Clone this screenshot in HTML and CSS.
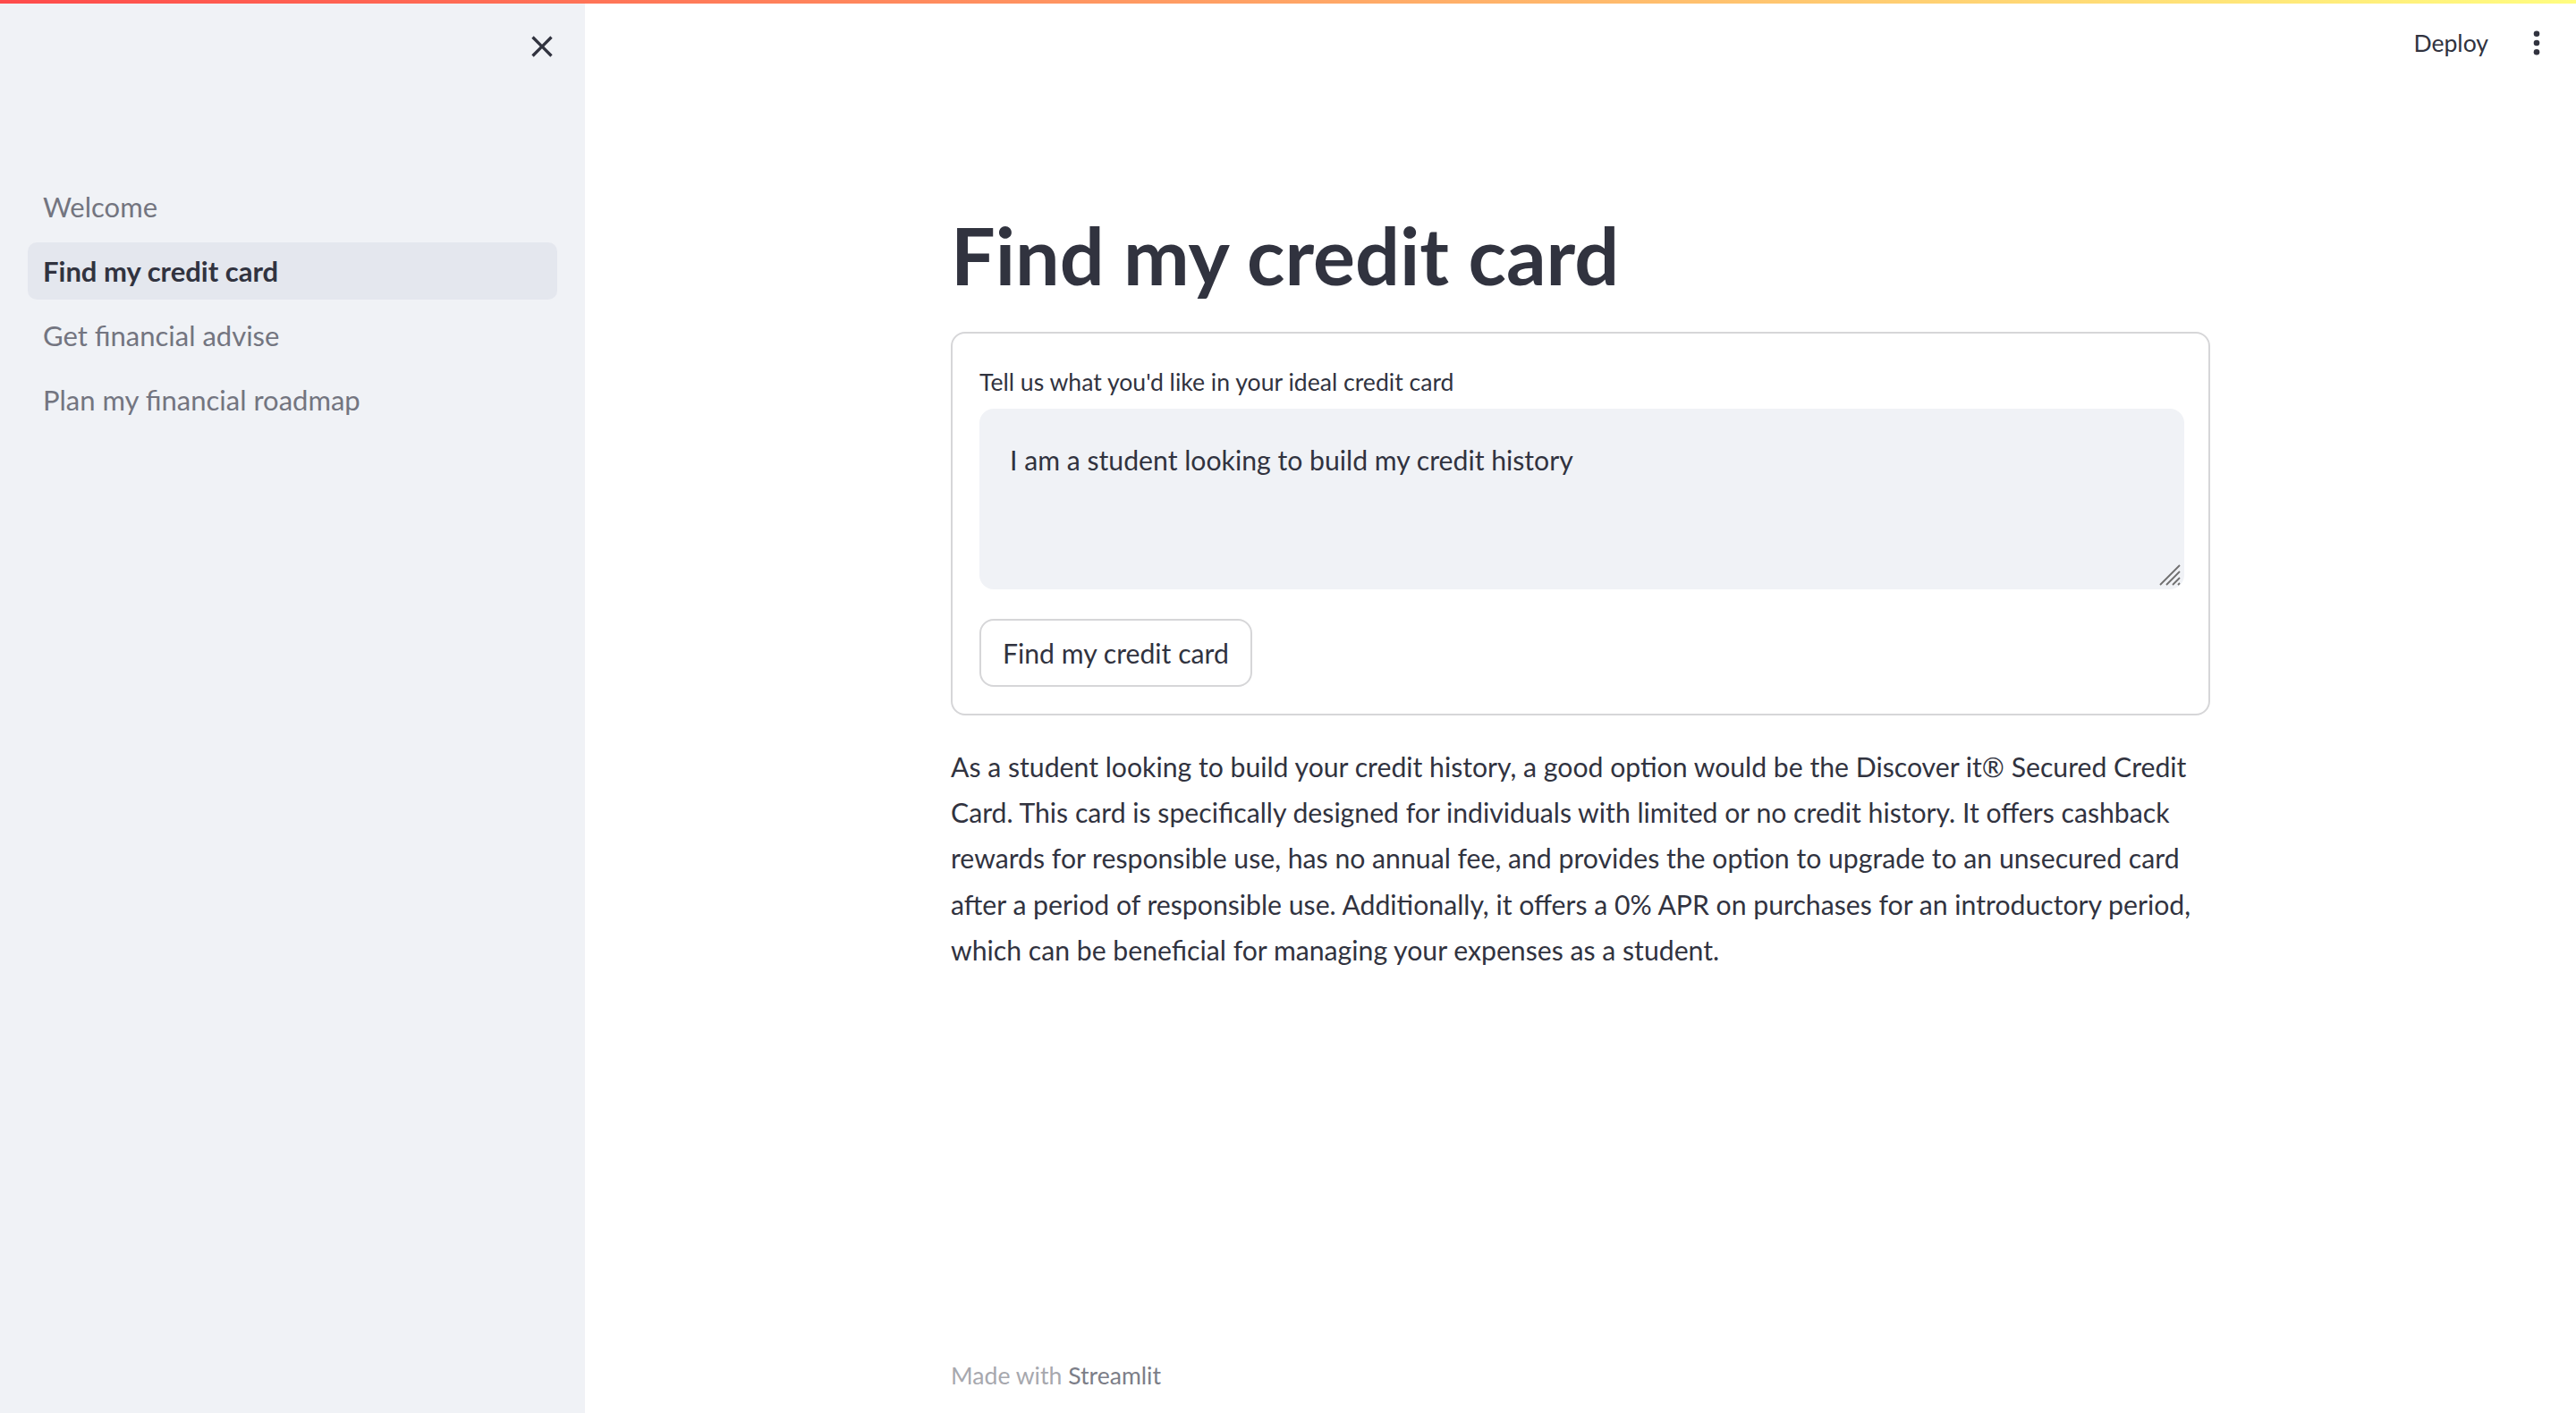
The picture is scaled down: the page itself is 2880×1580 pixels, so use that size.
FILE: index.html
```html
<!DOCTYPE html>
<html lang="en">
<head>
<meta charset="utf-8">
<title>Find my credit card</title>
<link rel="stylesheet" href="styles.css">
</head>
<body>
<div class="decoration"></div>
<div class="app">
  <aside class="sidebar">
    <div class="sidebar-header">
      <button class="close-btn" aria-label="Close sidebar">
        <svg viewBox="0 0 24 24" width="40" height="40"><path d="M19 6.41L17.59 5 12 10.59 6.41 5 5 6.41 10.59 12 5 17.59 6.41 19 12 13.41 17.59 19 19 17.59 13.41 12z"/></svg>
      </button>
    </div>
    <nav class="nav">
      <a class="nav-item">Welcome</a>
      <a class="nav-item active">Find my credit card</a>
      <a class="nav-item">Get financial advise</a>
      <a class="nav-item">Plan my financial roadmap</a>
    </nav>
  </aside>
  <main class="main">
    <header class="topbar">
      <span class="deploy">Deploy</span>
      <span class="menu-btn">
        <svg viewBox="0 0 40 40" width="40" height="40"><circle cx="20" cy="9.7" r="3.3"/><circle cx="20" cy="20" r="3.3"/><circle cx="20" cy="30.3" r="3.3"/></svg>
      </span>
    </header>
    <div class="block">
      <h1 class="title">Find my credit card</h1>
      <form class="form">
        <label class="label">Tell us what you'd like in your ideal credit card</label>
        <div class="textarea-wrap">
          <textarea class="textarea" readonly>I am a student looking to build my credit history</textarea>
          <svg class="grip" viewBox="0 0 24 24" width="24" height="24"><path d="M1 23L23 1M8 23L23 8M15 23L23 15M21 23L23 21"/></svg>
        </div>
        <button type="button" class="btn">Find my credit card</button>
      </form>
      <p class="answer">As a student looking to build your credit history, a good option would be the Discover it® Secured Credit Card. This card is specifically designed for individuals with limited or no credit history. It offers cashback rewards for responsible use, has no annual fee, and provides the option to upgrade to an unsecured card after a period of responsible use. Additionally, it offers a 0% APR on purchases for an introductory period, which can be beneficial for managing your expenses as a student.</p>
    </div>
    <footer class="footer">Made with <span class="brand">Streamlit</span></footer>
  </main>
</div>
</body>
</html>
```
FILE: styles.css
```css
* { box-sizing: border-box; }
html, body { margin: 0; height: 100%; }
body {
  font-family: Lato, "Noto Sans", sans-serif;
  color: #31333f;
  background: #ffffff;
  display: flex;
  flex-direction: column;
  overflow: hidden;
}
.decoration {
  height: 4px;
  flex: none;
  background: linear-gradient(90deg, #ff4b4b, #fffd80);
}
.app {
  flex: 1;
  display: flex;
  min-height: 0;
}

/* Sidebar */
.sidebar {
  width: 654px;
  flex: none;
  background: #f0f2f6;
  display: flex;
  flex-direction: column;
}
.sidebar-header {
  height: 96px;
  display: flex;
  align-items: center;
  justify-content: flex-end;
  padding-right: 28px;
}
.close-btn {
  width: 40px;
  height: 40px;
  padding: 0;
  border: 0;
  background: transparent;
  display: flex;
  align-items: center;
  justify-content: center;
}
.close-btn svg { fill: #31333f; }
.nav {
  margin-top: 99px;
  padding: 0 31px;
  display: flex;
  flex-direction: column;
  gap: 8px;
}
.nav-item {
  height: 64px;
  display: flex;
  align-items: center;
  padding-left: 17px;
  border-radius: 10px;
  font-size: 31px;
  color: #737580;
}
.nav-item.active {
  background: #e4e7ee;
  color: #31333f;
  font-weight: 700;
}

/* Main */
.main {
  flex: 1;
  min-width: 0;
  display: flex;
  flex-direction: column;
}
.topbar {
  height: 88px;
  flex: none;
  display: flex;
  align-items: center;
  justify-content: flex-end;
  gap: 34px;
  padding-right: 24px;
}
.deploy {
  font-size: 26.6px;
  color: #31333f;
}
.menu-btn { display: flex; }
.menu-btn svg { fill: #31333f; }

.block {
  flex: 1;
  width: 1408px;
  margin: 0 auto;
  padding-top: 141px;
}
.title {
  margin: 0 0 34px;
  font-size: 88px;
  font-weight: 700;
  line-height: 104px;
  color: #31333f;
}
.form {
  border: 2px solid #d6d6d8;
  border-radius: 16px;
  padding: 30px 27px 30px 30px;
  display: flex;
  flex-direction: column;
  align-items: flex-start;
}
.label {
  height: 48px;
  display: flex;
  align-items: center;
  margin-bottom: 6px;
  font-size: 26.6px;
  color: #31333f;
}
.textarea-wrap {
  position: relative;
  width: 100%;
  margin-bottom: 33px;
}
.textarea {
  display: block;
  width: 100%;
  height: 202px;
  resize: none;
  border: 2px solid #f0f2f6;
  border-radius: 16px;
  background: #f0f2f6;
  padding: 31px 32px;
  font-family: Lato, "Noto Sans", sans-serif;
  font-size: 30.2px;
  line-height: 48px;
  color: #31333f;
  outline: none;
}
.grip {
  position: absolute;
  right: 4px;
  bottom: 4px;
  stroke: #6f6f6f;
  stroke-width: 1.8;
  fill: none;
}
.btn {
  height: 76px;
  padding: 0 24px;
  border: 2px solid #d6d6d8;
  border-radius: 16px;
  background: #ffffff;
  font-family: Lato, "Noto Sans", sans-serif;
  font-size: 30.2px;
  color: #31333f;
}
.answer {
  margin: 32px 0 0;
  font-size: 30.2px;
  line-height: 51.2px;
  color: #31333f;
}
.footer {
  width: 1408px;
  margin: 0 auto;
  padding-bottom: 21px;
  font-size: 26.6px;
  line-height: 42px;
  color: #a7a8ae;
}
.brand { color: #7c7e88; }
```
